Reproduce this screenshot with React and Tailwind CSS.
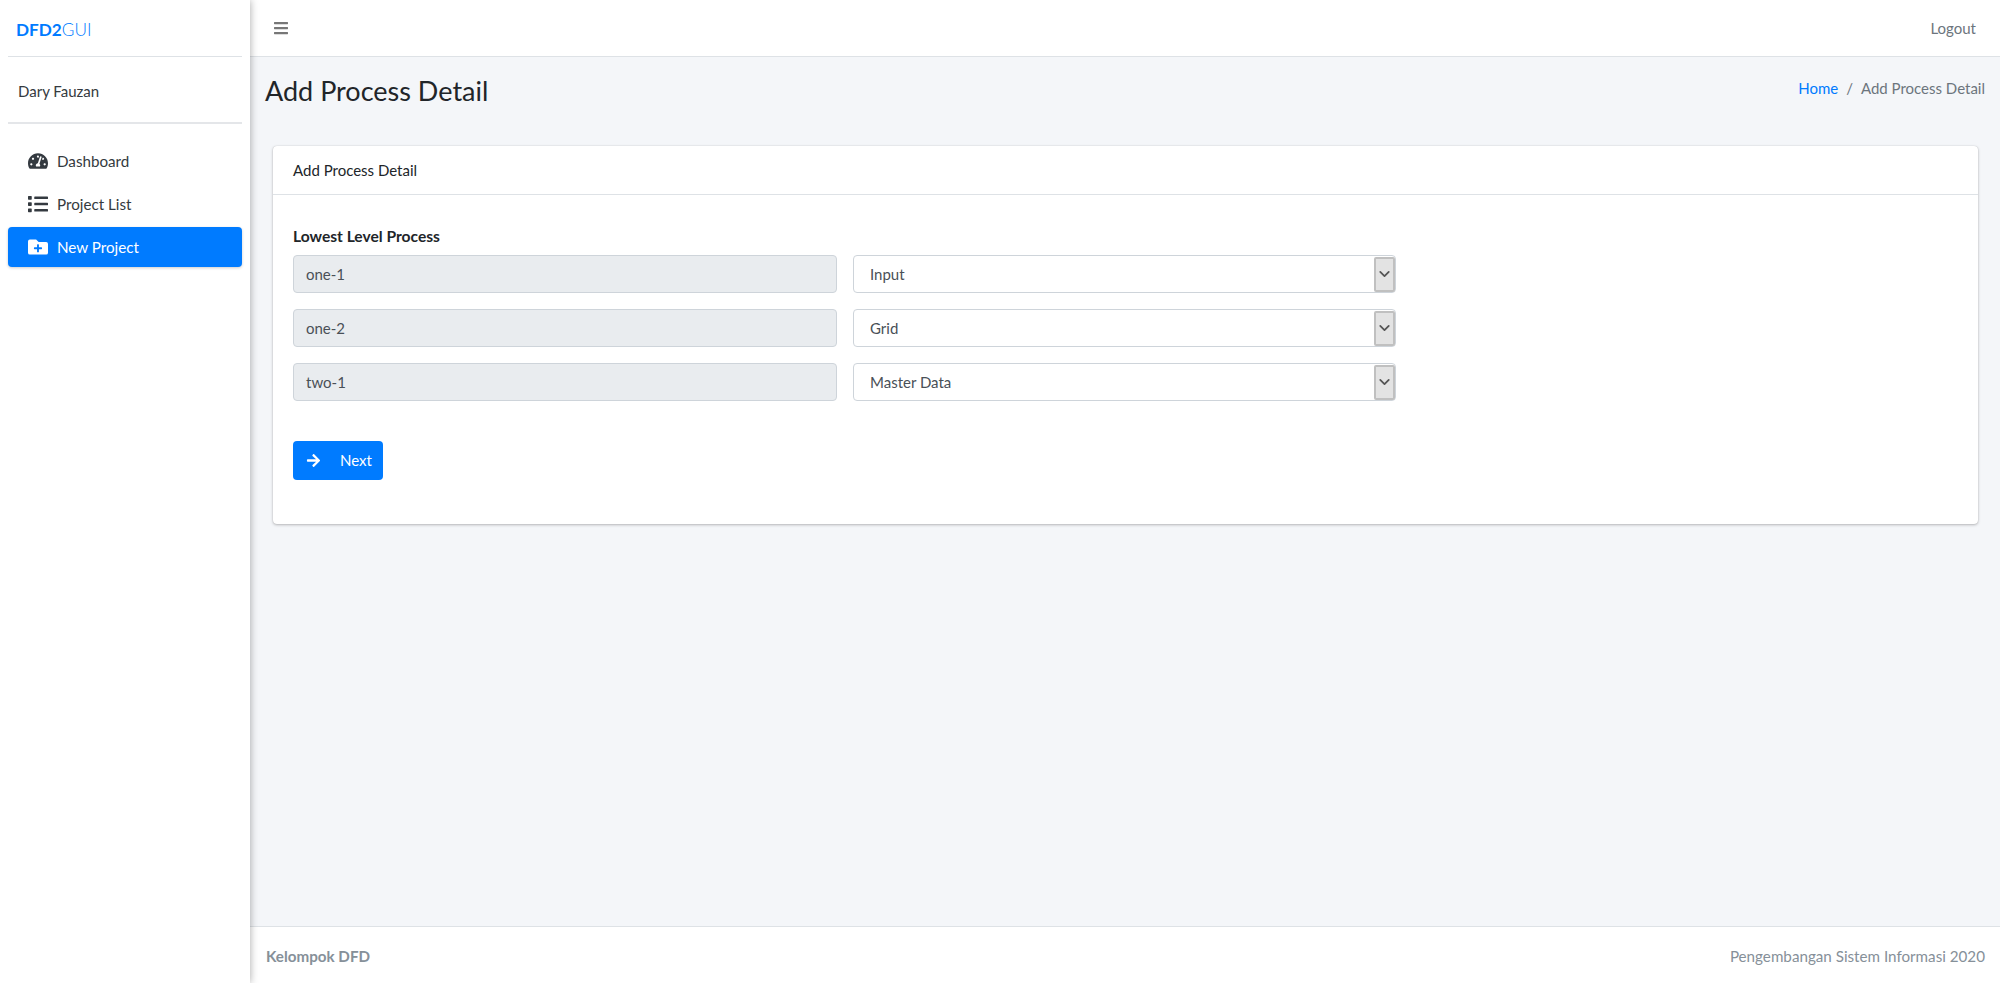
import { FaTachometerAlt, FaList, FaFolderPlus, FaArrowRight, FaBars } from 'react-icons/fa';
import { LuChevronDown } from 'react-icons/lu';

const rows = [
  { name: 'one-1', type: 'Input' },
  { name: 'one-2', type: 'Grid' },
  { name: 'two-1', type: 'Master Data' },
];

function NavItem({ icon, label, active }) {
  return (
    <a
      className={
        active
          ? 'flex h-[40px] items-center rounded-[4px] bg-[#007bff] pl-[20px] text-white shadow-[0_1px_3px_rgba(0,0,0,0.2)]'
          : 'flex h-[40px] items-center rounded-[4px] pl-[20px] text-[#343a40]'
      }
    >
      <span className="flex w-[29px] items-center text-[20px]">{icon}</span>
      <span className="pt-[1px] text-[15.2px]">{label}</span>
    </a>
  );
}

function ProcessRow({ name, type }) {
  return (
    <div className="flex gap-[16px]">
      <div className="flex h-[38px] w-[544px] items-center rounded-[4px] border border-[#ced4da] bg-[#e9ecef] pl-[12px] text-[#495057]">
        {name}
      </div>
      <div className="flex h-[38px] w-[543px] items-center justify-between rounded-[4px] border border-[#ced4da] bg-white pl-[16px] text-[#495057]">
        <span>{type}</span>
        <span className="flex h-[35px] w-[21px] items-center justify-center rounded-[2px] border-2 border-[#c0c0c0] bg-[#e3e3e3] text-[#555]">
          <LuChevronDown size={18} strokeWidth={2.5} />
        </span>
      </div>
    </div>
  );
}

export default function App() {
  return (
    <div className="flex h-[983px] w-[2000px] overflow-hidden bg-[#f4f6f9] font-['Lato','Noto_Sans',sans-serif] text-[15px] text-[#212529]">
      <aside className="relative z-10 flex w-[250px] shrink-0 flex-col bg-white px-[8px] shadow-[0_0_8px_rgba(0,0,0,0.35)]">
        <div className="flex h-[57px] items-center border-b border-[#dee2e6] pl-[8px] pt-[3px] text-[17.2px] text-[#007bff]">
          <b>DFD2</b>
          <span className="font-light">GUI</span>
        </div>
        <div className="flex h-[67px] items-center border-b-2 border-[#e4e6e9] pl-[10px] pt-[3px] text-[#343a40]">Dary Fauzan</div>
        <nav className="mt-[17px] flex flex-col gap-[3px]">
          <NavItem icon={<FaTachometerAlt />} label="Dashboard" />
          <NavItem icon={<FaList />} label="Project List" />
          <NavItem icon={<FaFolderPlus />} label="New Project" active />
        </nav>
      </aside>

      <div className="flex min-w-0 flex-1 flex-col">
        <header className="flex h-[57px] shrink-0 items-center justify-between border-b border-[#dee2e6] bg-white pl-[23px] pr-[24px] text-[#6c757d]">
          <FaBars className="text-[#777]" size={16} />
          <span>Logout</span>
        </header>

        <main className="flex-1 pl-[15px] pr-[14px]">
          <div className="flex h-[89px] justify-between pt-[16px]">
            <h1 className="text-[27px] leading-[1.3] font-normal text-[#212529]">Add Process Detail</h1>
            <div className="flex gap-[8px] pt-[4px] pr-[1px] text-[#6c757d]">
              <a className="text-[#007bff]">Home</a>
              <span>/</span>
              <span>Add Process Detail</span>
            </div>
          </div>

          <section className="mx-[8px] rounded-[4px] bg-white shadow-[0_0_1px_rgba(0,0,0,0.2),0_1px_3px_rgba(0,0,0,0.25)]">
            <div className="flex h-[49px] items-center border-b border-[#dee2e6] pl-[20px] pt-[1px] text-[#212529]">Add Process Detail</div>
            <div className="h-[329px] px-[20px] pt-[30px]">
              <label className="block h-[30px] text-[15.6px] font-bold text-[#212529]">Lowest Level Process</label>
              <div className="flex flex-col gap-[16px]">
                {rows.map((r) => (
                  <ProcessRow key={r.name} name={r.name} type={r.type} />
                ))}
              </div>
              <button className="mt-[40px] flex h-[39px] w-[90px] items-center rounded-[4px] bg-[#007bff] pl-[13px] text-white">
                <FaArrowRight size={15} />
                <span className="ml-[19px]">Next</span>
              </button>
            </div>
          </section>
        </main>

        <footer className="flex h-[57px] shrink-0 items-center justify-between border-t border-[#dee2e6] bg-white pl-[16px] pr-[15px] pt-[3px] text-[15.2px] text-[#869099]">
          <b>Kelompok DFD</b>
          <span>Pengembangan Sistem Informasi 2020</span>
        </footer>
      </div>
    </div>
  );
}
